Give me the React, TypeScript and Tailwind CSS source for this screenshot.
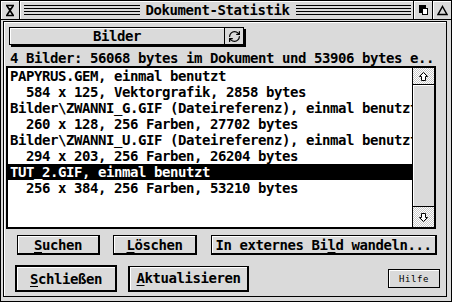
import { RefreshCw } from "lucide-react";

const rows = [
  "PAPYRUS.GEM, einmal benutzt",
  "  584 x 125, Vektorgrafik, 2858 bytes",
  "Bilder\\ZWANNI_G.GIF (Dateireferenz), einmal benutzt",
  "  260 x 128, 256 Farben, 27702 bytes",
  "Bilder\\ZWANNI_U.GIF (Dateireferenz), einmal benutzt",
  "  294 x 203, 256 Farben, 26204 bytes",
  "TUT_2.GIF, einmal benutzt",
  "  256 x 384, 256 Farben, 53210 bytes",
];

const SELECTED = 6;

function TitleLines() {
  return (
    <div className="h-[11px] flex-1 bg-[repeating-linear-gradient(to_bottom,#000_0px,#000_1px,transparent_1px,transparent_3px)]" />
  );
}

function ScrollArrow({ down }: { down?: boolean }) {
  return (
    <svg width="11" height="11" viewBox="0 0 11 11" className={down ? "rotate-180" : ""}>
      <path d="M5.5 1.5 L9.5 5.5 H7.5 V9.5 H3.5 V5.5 H1.5 Z" fill="#fff" stroke="#000" strokeWidth="1" />
    </svg>
  );
}

function Btn({
  className,
  children,
}: {
  className: string;
  children: React.ReactNode;
}) {
  return (
    <div
      className={
        "flex items-center justify-center bg-[#dadada] border-black shadow-[inset_1px_1px_0_#fff] " +
        className
      }
    >
      {children}
    </div>
  );
}

export default function App() {
  return (
    <div className="w-[452px] h-[302px] bg-[#dadada] border border-black flex flex-col font-['DejaVu_Sans_Mono',monospace] font-bold text-[14px] tracking-[-0.43px] text-black leading-[16px] overflow-hidden">
      {/* title bar */}
      <div className="h-[19px] flex border-b border-black shrink-0">
        <div className="w-[19px] border-r border-black flex items-center justify-center shadow-[inset_1px_1px_0_#fff]">
          <svg width="10" height="13" viewBox="0 0 10 13">
            <path d="M1 1.5 H9 M1 11.5 H9 M2 2 L8 11 M8 2 L2 11" stroke="#000" strokeWidth="1.6" fill="none" />
            <path d="M3.5 4 H6.5 L5 6.3 Z" fill="#000" />
          </svg>
        </div>
        <div className="flex-1 flex items-center pl-[4px] pr-[2px] gap-[6px] shadow-[inset_1px_1px_0_#fff]">
          <TitleLines />
          <span className="whitespace-pre">Dokument-Statistik</span>
          <TitleLines />
        </div>
        <div className="w-[19px] border-l border-black flex items-center justify-center shadow-[inset_1px_1px_0_#fff]">
          <svg width="11" height="12" viewBox="0 0 11 12">
            <rect x="1" y="1" width="7" height="8" fill="#000" />
            <rect x="4.5" y="4.5" width="5" height="6" fill="#fff" stroke="#000" strokeWidth="1" />
          </svg>
        </div>
        <div className="w-[19px] border-l border-black flex items-center justify-center shadow-[inset_1px_1px_0_#fff]">
          <svg width="11" height="11" viewBox="0 0 11 11">
            <path d="M5.5 1.5 L10 9.5 H1 Z" fill="none" stroke="#000" strokeWidth="1.5" />
          </svg>
        </div>
      </div>

      {/* dialog frame */}
      <div className="flex-1 pl-[2px] pr-[4px] pt-[1px] pb-[4px] flex">
        <div className="flex-1 border border-black shadow-[inset_1px_1px_0_#fff] flex flex-col">
          {/* popup */}
          <div className="mt-[5px] ml-[5px] flex">
            <div className="w-[216px] h-[18px] border border-black bg-[#dadada] shadow-[inset_1px_1px_0_#fff,2px_2px_0_#000] flex items-center justify-center">
              Bilder
            </div>
            <div className="w-[19px] h-[18px] border border-black border-l-0 bg-[#dadada] shadow-[2px_2px_0_#000] flex items-center justify-center">
              <RefreshCw size={13} strokeWidth={2.2} color="#000" />
            </div>
          </div>

          <div className="mt-[5px] ml-[6px] h-[16px] whitespace-pre overflow-hidden">
            4 Bilder: 56068 bytes im Dokument und 53906 bytes e..
          </div>

          {/* list */}
          <div className="ml-[2px] w-[430px] h-[163px] border-2 border-black bg-white flex">
            <div className="flex-1 overflow-hidden">
              {rows.map((r, i) => (
                <div
                  key={i}
                  className={
                    "h-[16px] pl-[2px] whitespace-pre overflow-hidden " +
                    (i === SELECTED ? "bg-black text-white" : "")
                  }
                >
                  {r}
                </div>
              ))}
            </div>
            <div className="w-[22px] border-l border-black flex flex-col bg-[#dadada]">
              <div className="h-[17px] border-b border-black flex items-center justify-center bg-[repeating-conic-gradient(#c8c8c8_0%_25%,#ffffff_0%_50%)] bg-[length:2px_2px]">
                <ScrollArrow />
              </div>
              <div className="flex-1 shadow-[inset_1px_1px_0_#fff]" />
              <div className="h-[21px] border-t border-black flex items-center justify-center bg-[repeating-conic-gradient(#c8c8c8_0%_25%,#ffffff_0%_50%)] bg-[length:2px_2px]">
                <ScrollArrow down />
              </div>
            </div>
          </div>

          {/* buttons row 1 */}
          <div className="mt-[6px] flex">
            <Btn className="ml-[13px] w-[83px] h-[20px] border border-r-2 border-b-2">
              <span className="underline underline-offset-2">S</span>uchen
            </Btn>
            <Btn className="ml-[13px] w-[84px] h-[20px] border border-r-2 border-b-2">
              <span className="underline underline-offset-2">L</span>öschen
            </Btn>
            <Btn className="ml-[14px] w-[226px] h-[20px] border border-r-2 border-b-2 whitespace-pre">
              In externes Bi<span className="underline underline-offset-2">l</span>d wandeln...
            </Btn>
          </div>

          {/* buttons row 2 */}
          <div className="mt-[10px] flex items-center">
            <Btn className="ml-[11px] w-[102px] h-[27px] border-2">
              <span className="underline underline-offset-2">S</span>chließen
            </Btn>
            <Btn className="ml-[11px] w-[121px] h-[26px] border border-l-2 border-r-2 border-b-2">
              <span className="underline underline-offset-2">A</span>ktualisieren
            </Btn>
            <Btn className="ml-[139px] w-[52px] h-[19px] border">
              <span className="font-normal text-[9px] tracking-[0.6px] text-black font-['DejaVu_Sans_Mono',monospace]">
                Hilfe
              </span>
            </Btn>
          </div>
        </div>
      </div>
    </div>
  );
}
